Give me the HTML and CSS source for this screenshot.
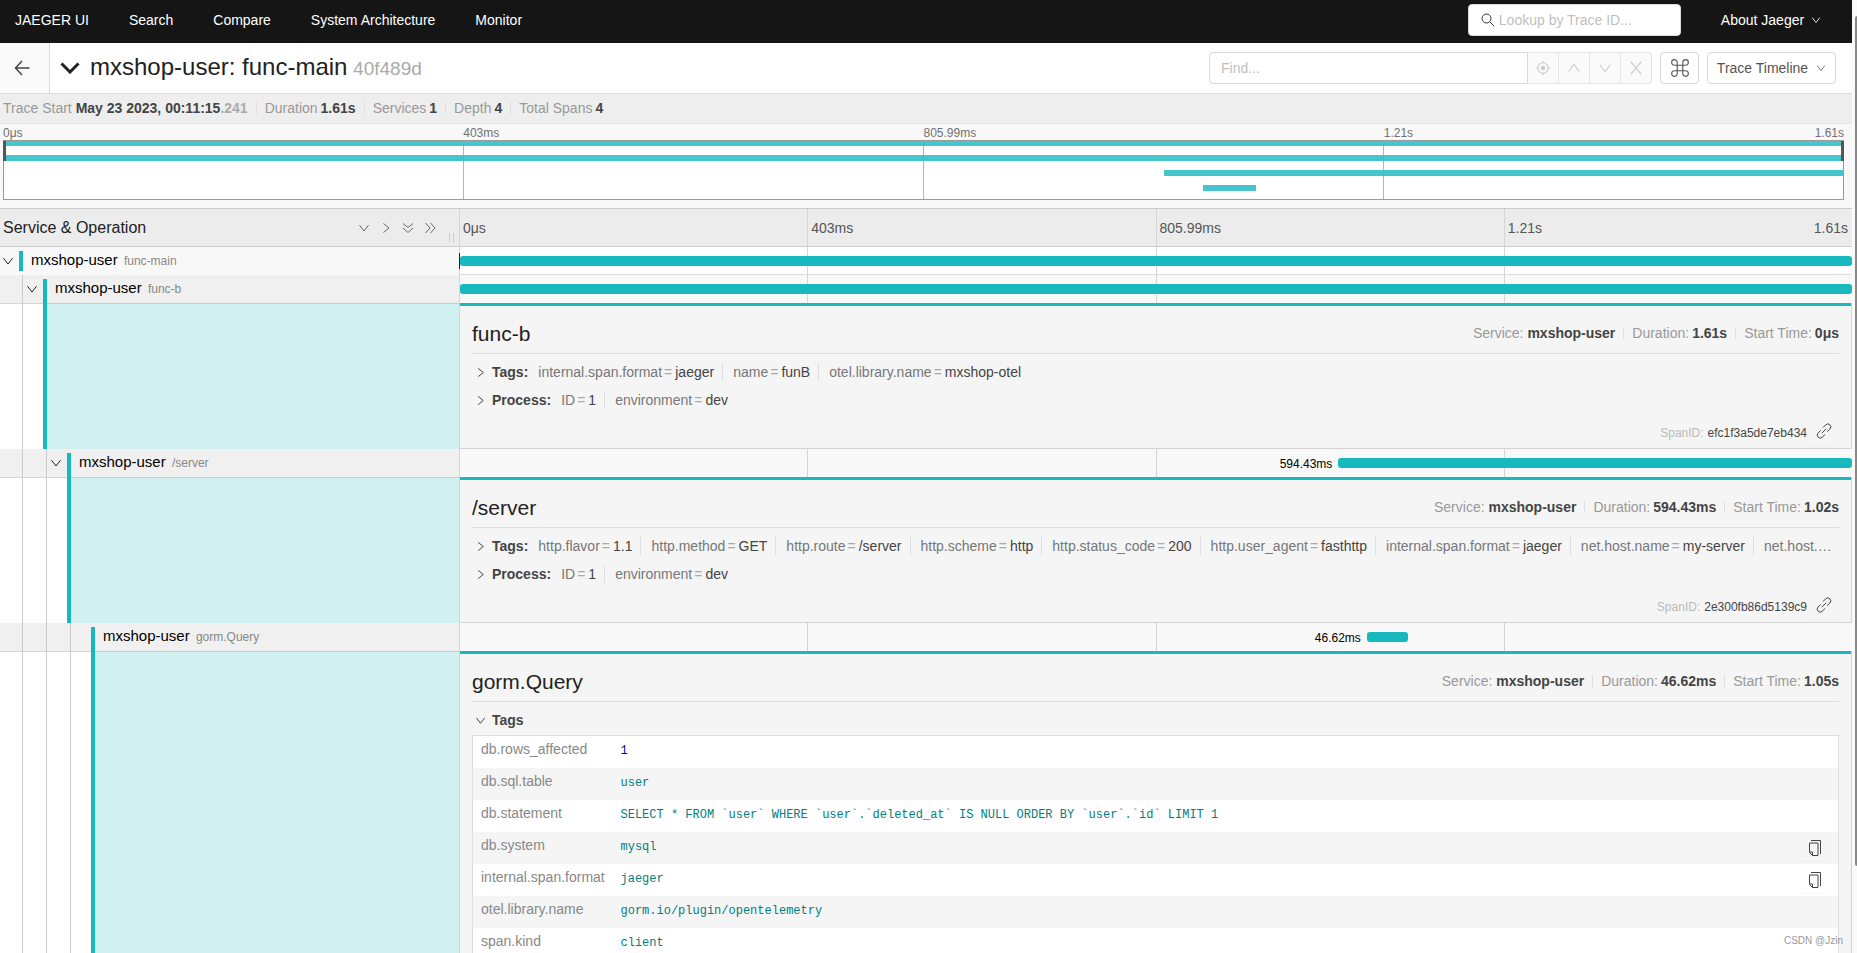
FILE: index.html
```
<!DOCTYPE html>
<html lang="en">
<head>
<meta charset="utf-8">
<title>Jaeger UI</title>
<link rel="stylesheet" href="styles.css">
</head>
<body>
<svg class="defs" aria-hidden="true">
  <symbol id="down" viewBox="0 0 12 12"><path d="M1.5 3.2 6 9l4.500-5.800" /></symbol>
  <symbol id="up" viewBox="0 0 12 12"><path d="M1.500 9 6 3l4.500 6" /></symbol>
  <symbol id="right" viewBox="0 0 12 12"><path d="M3.500 1.500 9 6l-5.500 4.500" /></symbol>
  <symbol id="ddown" viewBox="0 0 12 12"><path d="M1 1.500 6 5.500l5-4M1 6l5 4.500L11 6" /></symbol>
  <symbol id="dright" viewBox="0 0 12 12"><path d="M1.500 1 6 6l-4.500 5M6.500 1 11 6l-4.500 5" /></symbol>
  <symbol id="close" viewBox="0 0 12 12"><path d="m1.500.5 9 11m0-11-9 11" /></symbol>
  <symbol id="link" viewBox="0 0 16 16"><path d="M7 4.500 9.700 1.800a2.900 2.900 0 0 1 4.200 4.200l-2.700 2.700M9 11.500l-2.700 2.700A2.900 2.900 0 0 1 2.100 10l2.700-2.700M5.800 10.200l4.400-4.400" /></symbol>
  <symbol id="copy" viewBox="0 0 16 18"><path d="M4 1.500h9.500V15M2.500 4H11v12.500H5.500l-3-3zM2.500 13h3v3.500" /></symbol>
</svg>
<div class="window">
<div class="page">
  <nav class="topnav">
    <a href="#">JAEGER UI</a>
    <a href="#">Search</a>
    <a href="#">Compare</a>
    <a href="#">System Architecture</a>
    <a href="#">Monitor</a>
    <label class="lookup">
      <svg class="icon" viewBox="0 0 14 14"><circle cx="5.500" cy="5.500" r="4.500"/><path d="m8.800 8.800 4.400 4.400"/></svg>
      <input type="text" placeholder="Lookup by Trace ID..." aria-label="Lookup by Trace ID">
    </label>
    <a class="about" href="#">About Jaeger <svg class="icon small"><use href="#down"/></svg></a>
  </nav>

  <header class="titlebar">
    <a class="back" href="#" aria-label="Back"><svg class="icon" viewBox="0 0 16 16"><path d="M15.500 8H1.500M8 1 1.500 8 8 15"/></svg></a>
    <button class="collapse" aria-label="Collapse summary"><svg viewBox="0 0 20 12"><path d="m1.500 1.500 8.500 8.500 8.500-8.500"/></svg></button>
    <h1>mxshop-user: func-main <small>40f489d</small></h1>
    <div class="finder">
      <input type="text" placeholder="Find..." aria-label="Find">
      <button disabled aria-label="Locate"><svg class="icon" viewBox="0 0 12 12"><circle cx="6" cy="6" r="4.500"/><circle class="dot" cx="6" cy="6" r="1.500"/><path d="M6 0v2M6 10v2M0 6h2M10 6h2"/></svg></button>
      <button disabled aria-label="Previous"><svg class="icon"><use href="#up"/></svg></button>
      <button disabled aria-label="Next"><svg class="icon"><use href="#down"/></svg></button>
      <button disabled aria-label="Clear"><svg class="icon"><use href="#close"/></svg></button>
    </div>
    <button class="btn keys" aria-label="Keyboard shortcuts"><svg class="icon" viewBox="0 0 18 18"><path d="M6.500 6.500h5v5h-5zM6.500 6.500H4A2.500 2.500 0 1 1 6.500 4zM11.500 6.500V4A2.500 2.500 0 1 1 14 6.500zM11.500 11.500H14a2.500 2.500 0 1 1-2.500 2.500zM6.500 11.500V14A2.500 2.500 0 1 1 4 11.500z"/></svg></button>
    <button class="btn view">Trace Timeline <svg class="icon small"><use href="#down"/></svg></button>
  </header>

  <ul class="summary">
    <li>Trace Start <b>May 23 2023, 00:11:15<i>.241</i></b></li>
    <li>Duration <b>1.61s</b></li>
    <li>Services <b>1</b></li>
    <li>Depth <b>4</b></li>
    <li>Total Spans <b>4</b></li>
  </ul>

  <section class="minimap">
    <div class="mini-labels"><span>0μs</span><span>403ms</span><span>805.99ms</span><span>1.21s<em>1.61s</em></span></div>
    <div class="mini-box">
      <div class="mini-bars">
        <div class="mini-bar"></div>
        <div class="mini-bar"></div>
        <div class="mini-bar" style="margin-left:63.100%"></div>
        <div class="mini-bar" style="margin-left:65.200%;width:2.900%"></div>
      </div>
      <div class="mini-ticks"><i></i><i></i><i></i><i></i></div>
      <div class="handle start"></div><div class="handle end"></div>
    </div>
  </section>

  <div class="split head">
    <div class="head-left">
      <h2>Service &amp; Operation</h2>
      <button aria-label="Collapse one"><svg class="icon"><use href="#down"/></svg></button>
      <button aria-label="Expand one"><svg class="icon"><use href="#right"/></svg></button>
      <button aria-label="Expand all"><svg class="icon"><use href="#ddown"/></svg></button>
      <button aria-label="Collapse all"><svg class="icon"><use href="#dright"/></svg></button>
      <span class="grip"></span>
    </div>
    <div class="ticks"><span>0μs</span><span>403ms</span><span>805.99ms</span><span>1.21s<em>1.61s</em></span></div>
  </div>

  <div class="split row">
    <div class="name">
      <button class="toggle" aria-label="Toggle children"><svg class="icon"><use href="#down"/></svg></button>
      <a class="label" href="#">mxshop-user <small>func-main</small></a>
    </div>
    <div class="track"><div class="ticks"><span></span><span></span><span></span><span></span></div>
      <div class="lane"><div class="bar full"></div></div><div class="cursor"></div></div>
  </div>

  <div class="split row open">
    <div class="name"><i class="guide"></i>
      <button class="toggle" aria-label="Toggle children"><svg class="icon"><use href="#down"/></svg></button>
      <a class="label" href="#">mxshop-user <small>func-b</small></a>
    </div>
    <div class="track"><div class="ticks"><span></span><span></span><span></span><span></span></div>
      <div class="lane"><div class="bar full"></div></div></div>
  </div>
  <div class="split detail">
    <div class="tree"><i class="guide"></i><div class="tint"></div></div>
    <article class="panel">
      <header><h2>func-b</h2><ul class="facts"><li>Service: <b>mxshop-user</b></li><li>Duration: <b>1.61s</b></li><li>Start Time: <b>0μs</b></li></ul></header>
      <div class="kv"><svg class="icon"><use href="#right"/></svg><b>Tags:</b><span>internal.span.format<i>=</i><u>jaeger</u></span><span>name<i>=</i><u>funB</u></span><span>otel.library.name<i>=</i><u>mxshop-otel</u></span></div>
      <div class="kv"><svg class="icon"><use href="#right"/></svg><b>Process:</b><span>ID<i>=</i><u>1</u></span><span>environment<i>=</i><u>dev</u></span></div>
      <footer>SpanID: <span>efc1f3a5de7eb434</span><button class="iconbtn" aria-label="Copy link"><svg class="icon"><use href="#link"/></svg></button></footer>
    </article>
  </div>

  <div class="split row open">
    <div class="name"><i class="guide"></i><i class="guide"></i>
      <button class="toggle" aria-label="Toggle children"><svg class="icon"><use href="#down"/></svg></button>
      <a class="label" href="#">mxshop-user <small>/server</small></a>
    </div>
    <div class="track"><div class="ticks"><span></span><span></span><span></span><span></span></div>
      <div class="lane"><span class="time" style="width:63.100%">594.43ms</span><div class="bar" style="width:36.900%"></div></div></div>
  </div>
  <div class="split detail">
    <div class="tree"><i class="guide"></i><i class="guide"></i><div class="tint"></div></div>
    <article class="panel">
      <header><h2>/server</h2><ul class="facts"><li>Service: <b>mxshop-user</b></li><li>Duration: <b>594.43ms</b></li><li>Start Time: <b>1.02s</b></li></ul></header>
      <div class="kv"><svg class="icon"><use href="#right"/></svg><b>Tags:</b><span>http.flavor<i>=</i><u>1.1</u></span><span>http.method<i>=</i><u>GET</u></span><span>http.route<i>=</i><u>/server</u></span><span>http.scheme<i>=</i><u>http</u></span><span>http.status_code<i>=</i><u>200</u></span><span>http.user_agent<i>=</i><u>fasthttp</u></span><span>internal.span.format<i>=</i><u>jaeger</u></span><span>net.host.name<i>=</i><u>my-server</u></span><span>net.host.…</span></div>
      <div class="kv"><svg class="icon"><use href="#right"/></svg><b>Process:</b><span>ID<i>=</i><u>1</u></span><span>environment<i>=</i><u>dev</u></span></div>
      <footer>SpanID: <span>2e300fb86d5139c9</span><button class="iconbtn" aria-label="Copy link"><svg class="icon"><use href="#link"/></svg></button></footer>
    </article>
  </div>

  <div class="split row open">
    <div class="name"><i class="guide"></i><i class="guide"></i><i class="guide"></i><span class="toggle"></span>
      <a class="label" href="#">mxshop-user <small>gorm.Query</small></a>
    </div>
    <div class="track"><div class="ticks"><span></span><span></span><span></span><span></span></div>
      <div class="lane"><span class="time" style="width:65.150%">46.62ms</span><div class="bar" style="width:2.950%"></div></div></div>
  </div>
  <div class="split detail last">
    <div class="tree"><i class="guide"></i><i class="guide"></i><i class="guide"></i><div class="tint"></div></div>
    <article class="panel">
      <header><h2>gorm.Query</h2><ul class="facts"><li>Service: <b>mxshop-user</b></li><li>Duration: <b>46.62ms</b></li><li>Start Time: <b>1.05s</b></li></ul></header>
      <div class="kv"><svg class="icon"><use href="#down"/></svg><b>Tags</b></div>
      <table class="tags">
        <tr><th scope="row">db.rows_affected</th><td class="num">1</td><td></td></tr>
        <tr><th scope="row">db.sql.table</th><td>user</td><td></td></tr>
        <tr><th scope="row">db.statement</th><td>SELECT * FROM `user` WHERE `user`.`deleted_at` IS NULL ORDER BY `user`.`id` LIMIT 1</td><td></td></tr>
        <tr><th scope="row">db.system</th><td>mysql</td><td><button class="iconbtn" aria-label="Copy value"><svg class="icon"><use href="#copy"/></svg></button></td></tr>
        <tr><th scope="row">internal.span.format</th><td>jaeger</td><td><button class="iconbtn" aria-label="Copy value"><svg class="icon"><use href="#copy"/></svg></button></td></tr>
        <tr><th scope="row">otel.library.name</th><td>gorm.io/plugin/opentelemetry</td><td></td></tr>
        <tr><th scope="row">span.kind</th><td>client</td><td></td></tr>
      </table>
    </article>
  </div>
</div>
<div class="rail"><div class="thumb"></div></div>
<div class="watermark">CSDN @Jzin</div>
</div>
</body>
</html>
```
FILE: styles.css
```
* { box-sizing: border-box; }
body {
  margin: 0;
  background: #fff;
  color: #222;
  font: 14px/20px "Liberation Sans", Arial, sans-serif;
}
h1, h2, ul { margin: 0; padding: 0; font-weight: 400; list-style: none; }
a { color: inherit; text-decoration: none; }
button, input { font: inherit; color: inherit; margin: 0; }
button { display: flex; align-items: center; justify-content: center; padding: 0; border: 0; background: none; }
i, em { font-style: normal; }
u { text-decoration: none; }
.defs { position: absolute; width: 0; height: 0; }
.icon { flex: none; width: 12px; height: 12px; fill: none; stroke: currentColor; stroke-width: 1; }

.window { position: relative; display: flex; height: 100vh; overflow: hidden; }
.page { flex: 1; min-width: 0; display: flex; flex-direction: column; }
.page > * { flex: none; }

/* top navigation */
.topnav { display: flex; align-items: center; gap: 40px; height: 43px; padding: 0 31px 3px 15px; background: #151515; color: #fff; }
.lookup { display: flex; align-items: center; gap: 4px; width: 213px; height: 32px; margin-left: auto; padding: 0 12px; border-radius: 4px; border: 1px solid #d9d9d9; background: #fff; color: #333; }
.lookup .icon { width: 14px; height: 14px; }
.lookup input { flex: 1; min-width: 0; border: 0; padding: 0; background: none; outline: 0; }
::placeholder { color: #bfbfbf; opacity: 1; }
.icon.small { width: 10px; height: 10px; margin-left: 3px; }

/* title bar */
.titlebar { display: flex; align-items: center; height: 51px; padding-right: 16px; border-bottom: 1px solid #ddd; }
.back { display: flex; align-items: center; justify-content: center; align-self: stretch; width: 50px; padding-right: 6px; border-right: 1px solid #ddd; background: #fafafa; color: #444; }
.back .icon { width: 16px; height: 16px; stroke-width: 1.500; }
.collapse { margin-left: 10px; }
.collapse svg { width: 20px; height: 12px; fill: none; stroke: #222; stroke-width: 3; }
h1 { margin: 0 auto 0 10px; font-size: 24px; line-height: 32px; }
h1 small { margin-left: -1px; font-size: 19px; color: #aaa; }
.finder { display: flex; width: 443px; height: 32px; margin-right: 8px; }
.finder input { flex: 1; min-width: 0; padding: 0 11px; border: 1px solid #d9d9d9; border-radius: 4px 0 0 4px; background: #fff; outline: 0; }
.finder button { width: 31px; border: 1px solid #e5e5e5; border-left: 0; background: #fafafa; color: #ccc; }
.finder button:last-child { border-radius: 0 4px 4px 0; }
.finder .icon { width: 14px; height: 14px; }
.finder .dot { fill: currentColor; }
.btn { height: 32px; border: 1px solid #d9d9d9; border-radius: 4px; background: #fff; color: #555; }
.keys { width: 39px; margin-right: 8px; }
.keys .icon { width: 20px; height: 20px; }
.view { width: 129px; }
.view .icon { margin-left: 8px; }

/* trace facts */
.summary { display: flex; align-items: center; height: 30px; padding: 0 3px 2px; border-bottom: 1px solid #e4e4e4; background: #eee; color: #999; }
.summary b { color: #444; }
.summary i { color: #aaa; }
.summary li + li, .facts li + li { display: flex; gap: 3px; align-items: center; }
.summary li + li::before, .facts li + li::before { content: ""; width: 1px; height: 12px; margin: 0 5px 0 8px; background: #ddd; }

/* minimap */
.minimap { padding: 1px 8px 8px 3px; background: #f8f8f8; border-bottom: 1px solid #ccc; }
.mini-labels, .mini-ticks { display: grid; grid-template-columns: repeat(4, 1fr); }
.mini-labels { height: 15px; font-size: 12px; line-height: 16px; color: #717171; }
.mini-labels span { display: flex; justify-content: space-between; }
.mini-box { position: relative; height: 60px; border: 1px solid #999; background: #fff; }
.mini-bars { display: grid; gap: 9px; }
.mini-bar { height: 6px; background: #44c6cc; }
.mini-bar:first-child { height: 5px; }
.mini-ticks { position: absolute; inset: 0 0 0 -1px; }
.mini-ticks i + i { border-left: 1px solid rgba(150, 150, 150, .7); }
.handle { position: absolute; top: 0; width: 3px; height: 20px; background: #555; }
.start { left: -1px; }
.end { right: -1px; }

/* timeline columns */
.split { display: grid; grid-template-columns: 459px minmax(0, 1fr); }
.head { height: 38px; background: #ececec; border-bottom: 1px solid #ccc; }
.head-left { position: relative; display: flex; align-items: center; padding: 0 18px 0 3px; color: #666; }
.head h2 { flex: 1; font-size: 16px; color: #222; }
.head button { width: 22px; }
.grip { position: absolute; right: 5px; bottom: 3px; width: 5px; height: 10px; border: solid #ccc; border-width: 0 1px; }
.ticks { display: grid; grid-template-columns: repeat(4, minmax(0, 1fr)); height: 100%; }
.ticks span { display: flex; align-items: center; justify-content: space-between; padding: 0 4px 0 3px; border-left: 1px solid #d5d5d5; color: #555; }

/* span rows */
.row { height: 28px; }
.name { display: flex; align-items: center; min-width: 0; background: #f8f8f8; }
.open .name { background: #f0f0f0; }
.guide { flex: none; align-self: stretch; width: 24px; border-right: 1px solid #ccc; }
.guide:first-child { width: 23px; }
.toggle { flex: none; width: 19px; height: 28px; padding-right: 3px; color: #222; }
.guide ~ .toggle { width: 20px; }
.label { align-self: stretch; flex: 1; margin-top: 4px; padding-left: 8px; border-left: 4px solid #17b8be; font-size: 15px; line-height: 18px; color: #000; white-space: nowrap; }
.row:not(.open) .label { margin-bottom: 4px; }
.label small { margin-left: 2px; font-size: 12px; color: #888; }
.track { position: relative; border-bottom: 1px solid #ddd; }
.open .track { background: #f8f8f8; border-bottom: 0; }
.lane { position: absolute; inset: 9px 0 auto 1px; display: flex; align-items: center; height: 10px; }
.bar { height: 10px; border-radius: 3px; background: #17b8be; }
.full { width: 100%; }
.time { padding: 1px 6px 0 0; text-align: right; font-size: 12px; color: #000; }
.cursor { position: absolute; left: 0; top: 6px; width: 1px; height: 16px; background: #222; }

/* span details */
.tree { display: flex; background: linear-gradient(#d5d5d5, #d5d5d5) top / 100% 1px no-repeat; }
.tint { flex: 1; margin-left: 20px; border-left: 4px solid #17b8be; background: #d1f0f2; }
.tint::before { content: ""; display: block; height: 1px; background: #b4d4d6; }
.panel { display: flex; flex-direction: column; min-width: 0; padding: 0 12px; border: solid #d3d3d3; border-width: 0 1px 1px; background: #f5f5f5; box-shadow: inset 0 3px #17b8be; }
.panel header { display: flex; align-items: center; justify-content: space-between; height: 51px; margin-bottom: 4px; padding-top: 11px; border-bottom: 1px solid #ddd; }
.panel h2 { font-size: 21px; line-height: 24px; }
.facts { display: flex; padding-bottom: 2px; color: #999; }
.facts b { color: #444; }
.kv { height: 28px; line-height: 28px; padding-left: 3px; overflow: hidden; white-space: nowrap; text-overflow: ellipsis; color: #777; }
.kv .icon { width: 11px; height: 11px; margin-right: 6px; color: #333; vertical-align: -1px; }
.kv b { margin-right: 10px; color: #444; }
.kv span + span { margin-left: 8px; padding: 1px 0 1px 10px; border-left: 1px solid #ddd; }
.kv i { margin: 0 3px 0 2px; color: #aaa; }
.kv u { color: #444; }
.panel footer { display: flex; align-items: center; justify-content: flex-end; gap: 4px; height: 31px; margin-top: auto; font-size: 12px; color: #bbb; }
.panel footer span { color: #444; }
.iconbtn { width: 31px; height: 24px; border-radius: 4px; color: #444; box-shadow: 0 2px 0 rgba(0, 0, 0, .015); }
.iconbtn .icon { width: 16px; height: 16px; }
.panel footer .iconbtn { margin-left: -3px; padding-bottom: 4px; }
.detail { height: 146px; }
.last { height: auto; }
.page > .last { flex: 1 0 auto; }
.tags { width: 100%; margin-top: 1px; border-collapse: collapse; border: 1px solid #ddd; background: #fff; }
.tags tr { height: 32px; }
.tags tr:nth-child(even) { background: #f5f5f5; }
.tags th { width: 140px; padding: 0 0 5px 8px; text-align: left; font-weight: 400; color: #888; }
.tags td { padding: 0 8px 1px; font: 12px/20px "Liberation Mono", monospace; color: #008080; }
.tags .num { color: #0000cd; }
.tags td:last-child { width: 48px; padding: 0 8px 0 9px; }
.tags .iconbtn .icon { width: 16px; height: 18px; }

/* window edge */
.rail { width: 5px; padding: 16px 0 0 3px; background: #fafafa; }
.thumb { height: 90.700%; border-radius: 2px 0 0 2px; background: #888; }
.watermark { position: absolute; right: 14px; bottom: 4px; font-size: 10px; line-height: 16px; color: #999; }
```
